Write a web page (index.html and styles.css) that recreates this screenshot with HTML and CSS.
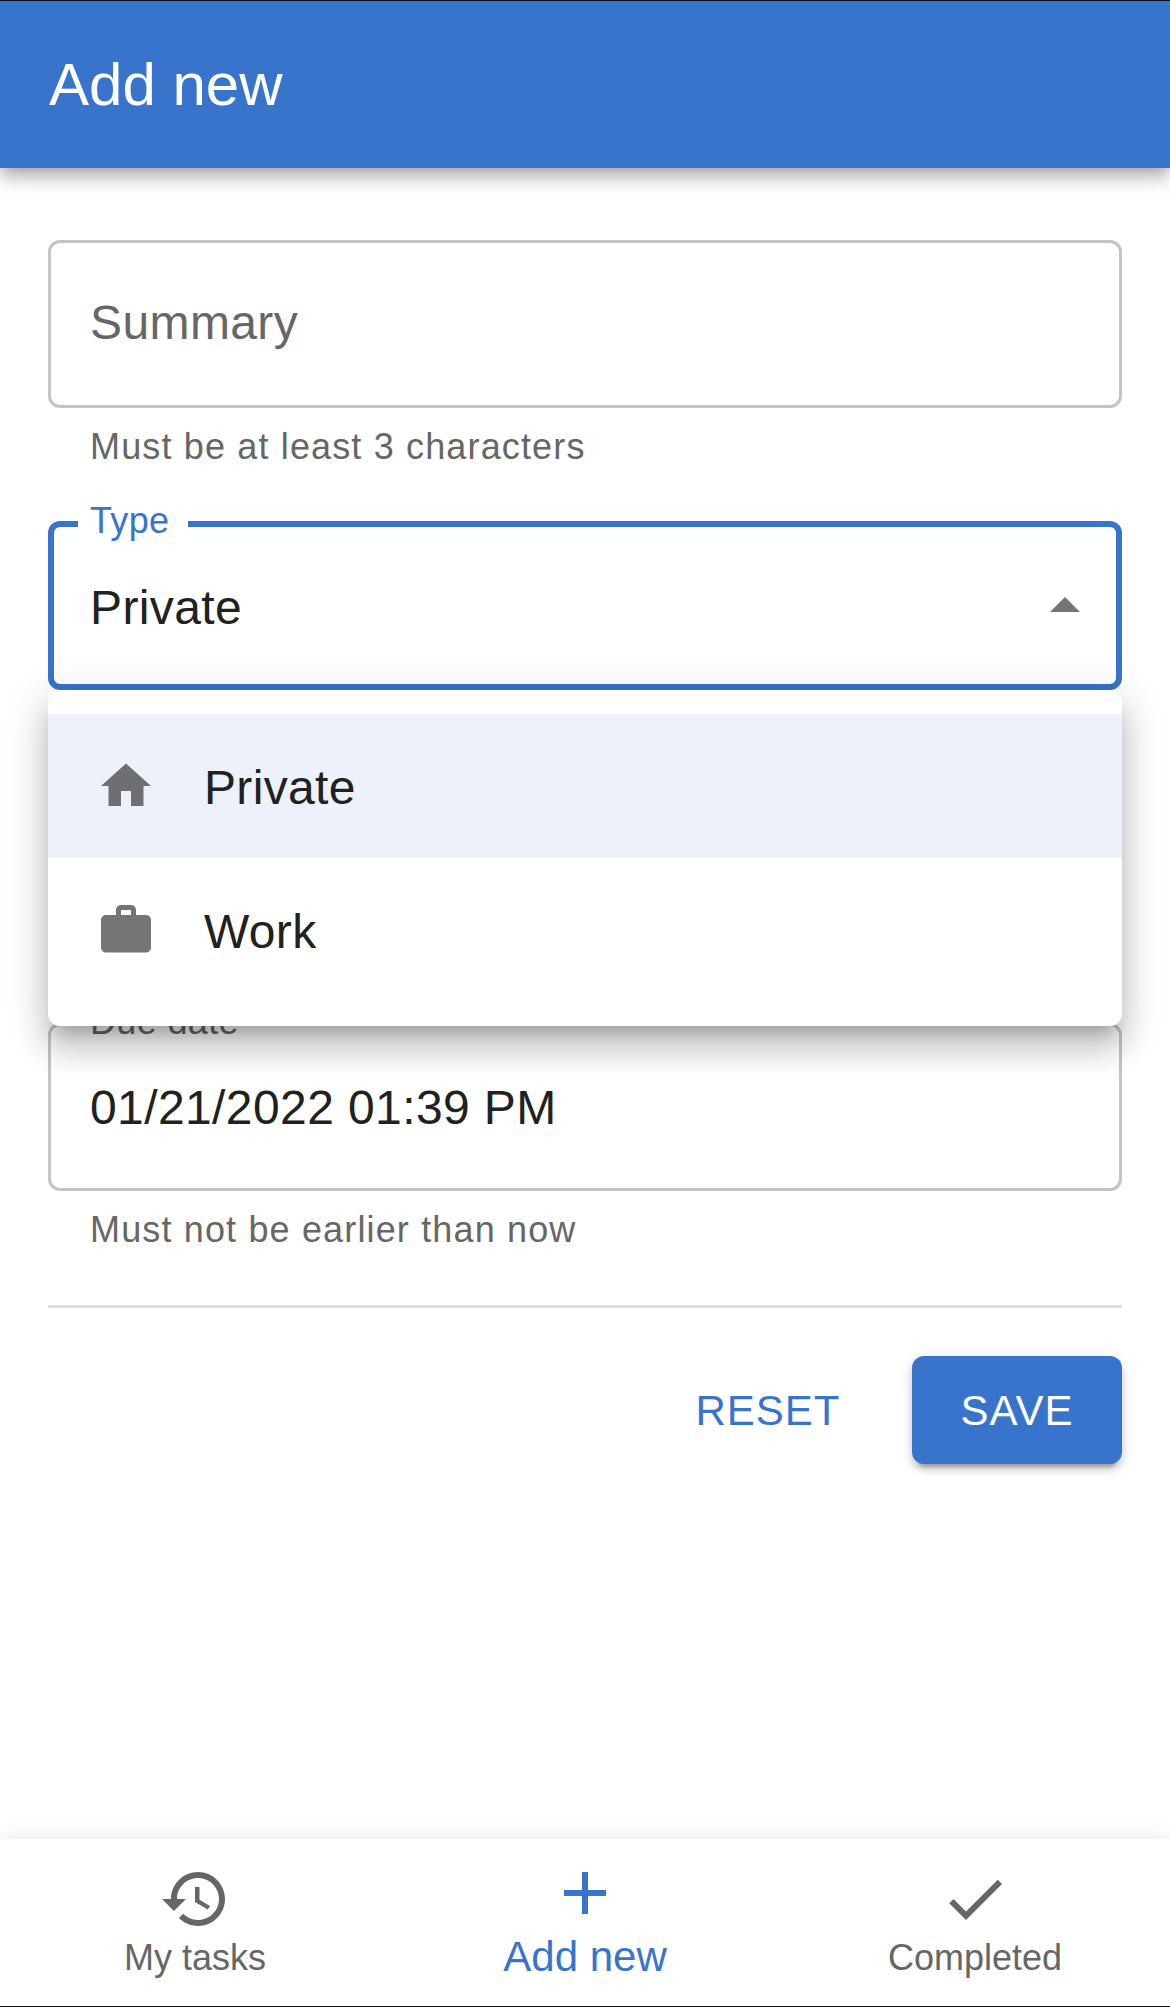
FILE: index.html
```html
<!DOCTYPE html>
<html lang="en">
<head>
<meta charset="utf-8">
<title>Add new</title>
<link rel="stylesheet" href="styles.css">
</head>
<body>
<div class="app">
  <header class="app-bar"><h1 class="app-title">Add new</h1></header>

  <main class="form">
    <div class="field">
      <div class="field-value placeholder">Summary</div>
    </div>
    <p class="helper">Must be at least 3 characters</p>

    <div class="field field-type focused">
      <span class="field-label">Type</span>
      <div class="field-value">Private</div>
      <svg class="icon arrow" viewBox="0 0 24 24"><path d="M7 14l5-5 5 5z"/></svg>
      <ul class="menu">
        <li class="menu-item selected">
          <svg class="icon icon-small" viewBox="0 0 24 24"><path d="M10 20v-6h4v6h5v-8h3L12 3 2 12h3v8z"/></svg>
          <span class="menu-text">Private</span>
        </li>
        <li class="menu-item">
          <svg class="icon icon-small" viewBox="0 0 24 24"><path d="M20 6h-4V4c0-1.11-.89-2-2-2h-4c-1.11 0-2 .89-2 2v2H4c-1.11 0-1.99.89-1.99 2L2 19c0 1.11.89 2 2 2h16c1.11 0 2-.89 2-2V8c0-1.11-.89-2-2-2zm-6 0h-4V4h4v2z"/></svg>
          <span class="menu-text">Work</span>
        </li>
      </ul>
    </div>

    <div class="field field-date">
      <span class="field-label">Due date</span>
      <div class="field-value">01/21/2022 01:39 PM</div>
    </div>
    <p class="helper">Must not be earlier than now</p>

    <hr class="divider">
    <div class="actions">
      <button class="button" type="button">RESET</button>
      <button class="button button-primary" type="button">SAVE</button>
    </div>
  </main>

  <nav class="bottom-nav">
    <a class="nav-item">
      <svg class="icon" viewBox="0 0 24 24"><path d="M13 3c-4.97 0-9 4.03-9 9H1l3.89 3.89.07.14L9 12H6c0-3.87 3.13-7 7-7s7 3.13 7 7-3.13 7-7 7c-1.93 0-3.68-.79-4.94-2.06l-1.42 1.42C8.27 19.99 10.51 21 13 21c4.97 0 9-4.03 9-9s-4.03-9-9-9zm-1 5v5l4.28 2.54.72-1.21-3.5-2.08V8H12z"/></svg>
      <span class="nav-label">My tasks</span>
    </a>
    <a class="nav-item active">
      <svg class="icon" viewBox="0 0 24 24"><path d="M19 13h-6v6h-2v-6H5v-2h6V5h2v6h6v2z"/></svg>
      <span class="nav-label">Add new</span>
    </a>
    <a class="nav-item">
      <svg class="icon" viewBox="0 0 24 24"><path d="M9 16.17 4.83 12l-1.42 1.41L9 19 21 7l-1.41-1.41z"/></svg>
      <span class="nav-label">Completed</span>
    </a>
  </nav>
</div>
</body>
</html>
```

FILE: styles.css
```css
* { box-sizing: border-box; }

body {
  margin: 0;
  background: #fff;
  color: #212121;
  font-family: "Liberation Sans", Arial, sans-serif;
  font-size: 48px;
}

.app {
  display: flex;
  flex-direction: column;
  height: 2007px;
  overflow: hidden;
}

.app-bar {
  flex: none;
  height: 168px;
  padding: 35px 49px 0;
  border-top: 1px solid #0d1420;
  background: #3874cb;
  color: #fff;
  box-shadow: 0 6px 12px -3px rgba(0, 0, 0, .2), 0 12px 15px 0 rgba(0, 0, 0, .14), 0 3px 30px 0 rgba(0, 0, 0, .12);
}

.app-title {
  margin: 0;
  font-size: 60px;
  font-weight: 400;
  line-height: 97px;
  letter-spacing: 0;
}

.form {
  flex: 1;
  padding: 72px 48px 0;
}

.field {
  position: relative;
  height: 168px;
  padding: 43px 39px 0;
  border: 3px solid #c4c4c4;
  border-radius: 12px;
}

.field-value {
  line-height: 73px;
  letter-spacing: .4px;
}

.placeholder { color: #666; }

.field-type {
  z-index: 1;
  height: 169px;
  margin-top: 45px;
}

.focused {
  padding: 44px 36px 0;
  border: 6px solid #3874cb;
}

.field-label {
  position: absolute;
  top: -31px;
  left: 27px;
  padding: 0 15px 0 12px;
  background: #fff;
  color: #666;
  font-size: 36px;
  line-height: 53px;
  letter-spacing: .34px;
}

.focused .field-label {
  top: -33px;
  left: 24px;
  padding-right: 19px;
  color: #3874cb;
}

.icon {
  display: block;
  flex: none;
  width: 72px;
  height: 72px;
  fill: currentColor;
}

.icon-small {
  width: 60px;
  height: 60px;
  color: rgba(0, 0, 0, .54);
}

.arrow {
  position: absolute;
  top: 43px;
  right: 15px;
  color: #757575;
}

.menu {
  position: absolute;
  top: 163px;
  left: -6px;
  right: -6px;
  margin: 0;
  padding: 24px 0;
  border-radius: 12px;
  background: #fff;
  list-style: none;
  box-shadow: 0 15px 15px -9px rgba(0, 0, 0, .2), 0 24px 30px 3px rgba(0, 0, 0, .14), 0 9px 42px 6px rgba(0, 0, 0, .12);
}

.menu-item {
  display: flex;
  align-items: center;
  gap: 48px;
  height: 144px;
  padding: 0 48px;
}

.selected { background: #edf1fa; }

.menu-text {
  padding-top: 3px;
  line-height: 73px;
  letter-spacing: .35px;
}

.field-date {
  height: 168px;
  margin-top: 333px;
  padding-top: 45px;
}

.helper {
  margin: 9px 42px 0;
  color: #666;
  font-size: 36px;
  line-height: 59px;
  letter-spacing: 1.15px;
}

.divider {
  height: 3px;
  margin: 46px 0 48px;
  border: 0;
  background: #e0e0e0;
}

.actions {
  display: flex;
  justify-content: flex-end;
  gap: 48px;
}

.button {
  min-width: 192px;
  height: 108px;
  padding: 1px 0 0;
  border: 0;
  border-radius: 12px;
  background: none;
  color: #3874cb;
  font-family: inherit;
  font-size: 42px;
  line-height: 73px;
  letter-spacing: 1px;
}

.button-primary {
  width: 210px;
  background: #3874cb;
  color: #fff;
  box-shadow: 0 9px 3px -6px rgba(0, 0, 0, .2), 0 6px 6px 0 rgba(0, 0, 0, .14), 0 3px 15px 0 rgba(0, 0, 0, .12);
}

.bottom-nav {
  display: grid;
  flex: none;
  grid-template-columns: repeat(3, 1fr);
  height: 168px;
  border-bottom: 1px solid #111;
  background: #fff;
  box-shadow: 0 9px 9px -6px rgba(0, 0, 0, .2), 0 9px 12px 0 rgba(0, 0, 0, .14), 0 3px 24px 0 rgba(0, 0, 0, .12);
}

.nav-item {
  display: flex;
  flex-direction: column;
  align-items: center;
  padding-top: 24px;
  color: #666;
}

.nav-label {
  margin-top: -1px;
  font-size: 36px;
  line-height: 47px;
}

.active {
  padding-top: 18px;
  color: #3874cb;
}

.active .nav-label {
  margin-top: 0;
  font-size: 42px;
  line-height: 55px;
}
```
